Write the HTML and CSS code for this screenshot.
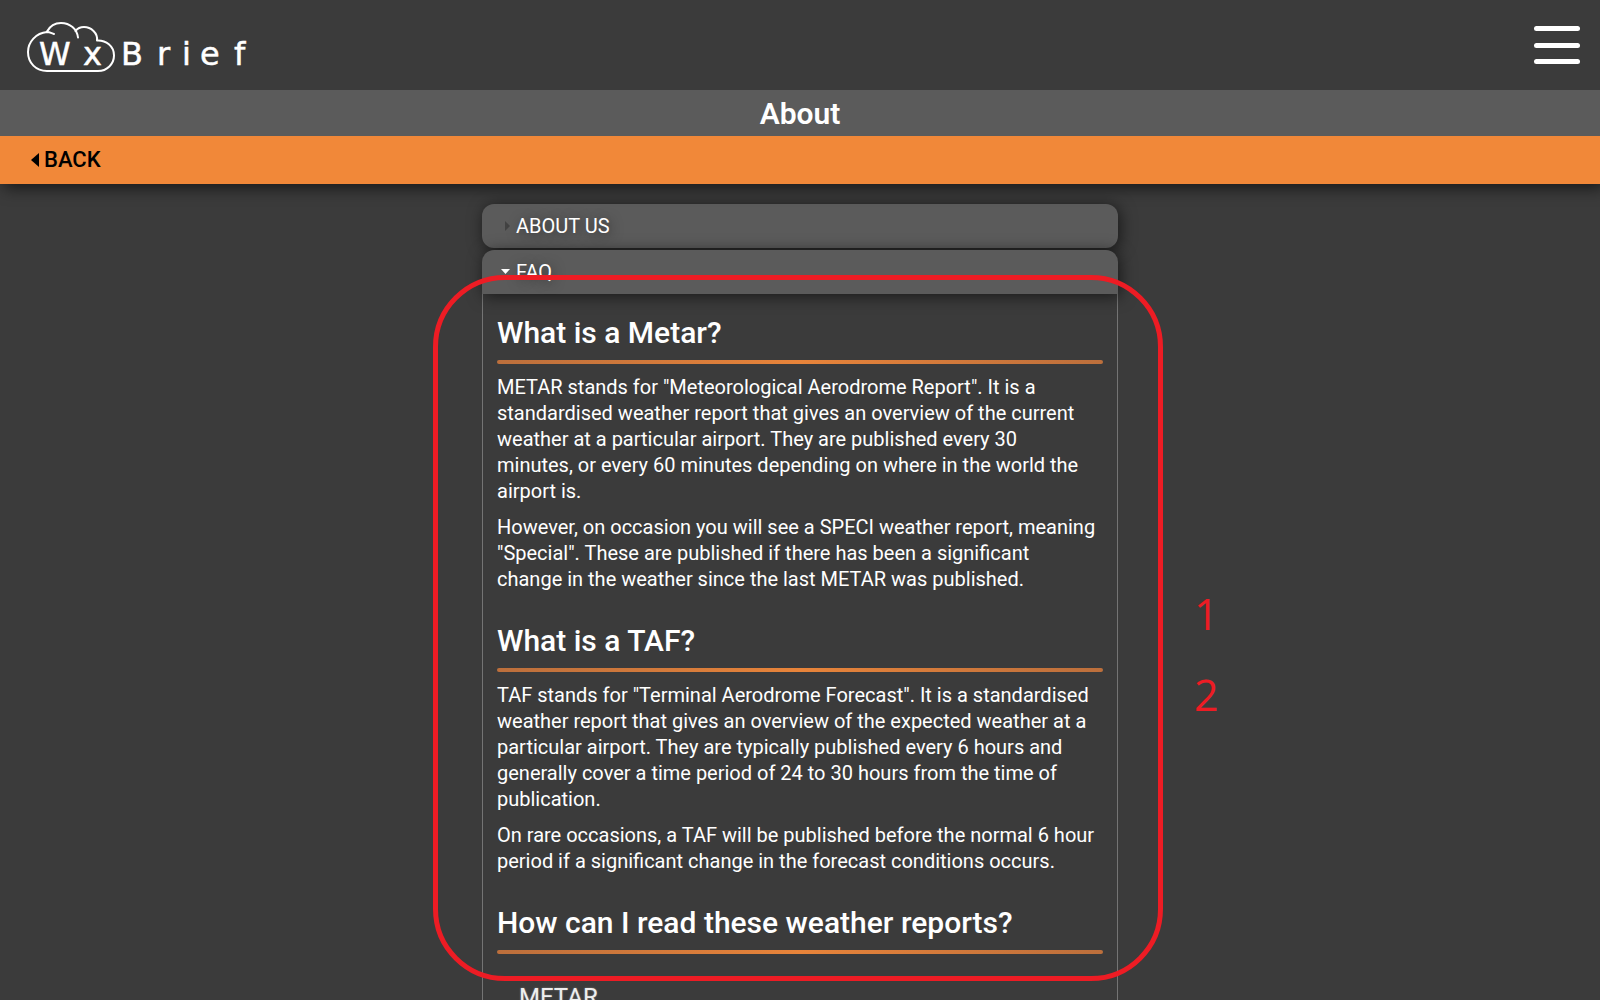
FILE: index.html
```html
<!DOCTYPE html>
<html lang="en">
<head>
<meta charset="utf-8">
<meta name="viewport" content="width=device-width, initial-scale=1">
<title>WxBrief - About</title>
<link rel="stylesheet" href="styles.css">
</head>
<body>
<header class="masthead">
  <a class="logo" href="#" aria-label="WxBrief home">
    <svg width="226" height="54" viewBox="26 20 226 54">
      <g fill="none" stroke="#fff" stroke-width="2" stroke-linecap="round" stroke-linejoin="round">
        <path d="M54 34C51 33 50 32 47 32C36 33 28 42 28 52C28 63 36 71 47 71H98C107 71 114 64 114 55.500C114 46 106 40 97 40.500C98 33 91 27 84 27C80 27 77 29 75.500 31"/>
        <path d="M47 31.500C50 26 55 23 61 23C70 23 77 29 78 37.500"/>
      </g>
      <g class="logo-text">
        <text x="39 83" y="65">Wx</text>
        <text x="121 157 182 200 234" y="65">Brief</text>
      </g>
    </svg>
  </a>
  <button class="menu-button" type="button" aria-label="Menu">
    <span class="bar"></span><span class="bar"></span><span class="bar"></span>
  </button>
</header>
<h1 class="page-title">About</h1>
<nav class="back-bar">
  <a class="back" href="#"><svg width="8" height="14" viewBox="0 0 8 14" aria-hidden="true"><path d="M8 0V14L0 7Z"/></svg>BACK</a>
</nav>
<main class="content">
  <details class="section">
    <summary class="section-head"><svg class="caret" width="12" height="12" viewBox="0 0 12 12" aria-hidden="true"><path fill="#424242" d="M4 1V11L9 6Z"/></svg>ABOUT US</summary>
  </details>
  <details class="section" open>
    <summary class="section-head"><svg class="caret" width="12" height="12" viewBox="0 0 12 12" aria-hidden="true"><path fill="#fff" d="M0 3H9L4.500 8Z"/></svg>FAQ</summary>
    <div class="panel">
      <h2 class="question">What is a Metar?</h2>
      <p class="answer">METAR stands for "Meteorological Aerodrome Report". It is a standardised weather report that gives an overview of the current weather at a particular airport. They are published every 30 minutes, or every 60 minutes depending on where in the world the airport is.</p>
      <p class="answer">However, on occasion you will see a SPECI weather report, meaning "Special". These are published if there has been a significant change in the weather since the last METAR was published.</p>
      <h2 class="question">What is a TAF?</h2>
      <p class="answer">TAF stands for "Terminal Aerodrome Forecast". It is a standardised weather report that gives an overview of the expected weather at a particular airport. They are typically published every 6 hours and generally cover a time period of 24 to 30 hours from the time of publication.</p>
      <p class="answer">On rare occasions, a TAF will be published before the normal 6 hour period if a significant change in the forecast conditions occurs.</p>
      <h2 class="question">How can I read these weather reports?</h2>
      <h3 class="topic">METAR</h3>
    </div>
  </details>
</main>
<div class="markup">
  <span>1</span>
  <span>2</span>
</div>
</body>
</html>
```
FILE: styles.css
```css
* {
  box-sizing: border-box;
}

body {
  position: relative;
  display: flex;
  flex-direction: column;
  height: 100vh;
  margin: 0;
  overflow: hidden;
  background: #3b3b3b;
  color: #fff;
  font-family: Roboto, "Liberation Sans", sans-serif;
  font-size: 20px;
  line-height: 26px;
}

.masthead {
  flex: none;
  display: flex;
  justify-content: space-between;
  align-items: center;
  height: 90px;
  padding: 4px 20px 0 26px;
}

.logo,
.logo svg {
  display: block;
}

.logo-text {
  fill: #fff;
  stroke: #fff;
  stroke-width: 0.5;
  font-family: "DejaVu Sans", sans-serif;
  font-size: 32px;
}

.menu-button {
  display: flex;
  flex-direction: column;
  justify-content: space-between;
  width: 46px;
  height: 38px;
  margin-bottom: 4px;
  padding: 0;
  border: 0;
  background: none;
}

.bar {
  height: 5px;
  border-radius: 3px;
  background: #fff;
}

.page-title {
  position: relative;
  z-index: 2;
  flex: none;
  height: 46px;
  margin: 0;
  background: #5b5b5b;
  font-size: 30px;
  font-weight: 600;
  line-height: 48px;
  text-align: center;
}

.back-bar {
  z-index: 1;
  flex: none;
  display: flex;
  align-items: center;
  height: 48px;
  padding: 0 31px;
  background: #f18839;
  box-shadow: 4px 4px 16px rgba(0, 0, 0, 0.6);
}

.back {
  display: flex;
  align-items: center;
  gap: 5px;
  color: #000;
  font-size: 22px;
  font-weight: 500;
  text-decoration: none;
}

.content {
  flex: 1;
  display: flex;
  flex-direction: column;
  gap: 2px;
  min-height: 0;
  padding: 20px 16px 0;
  overflow: hidden;
}

.section {
  flex: none;
  width: 100%;
  max-width: 636px;
  margin: 0 auto;
}

.section-head {
  position: relative;
  display: flex;
  align-items: center;
  gap: 3px;
  height: 44px;
  padding-left: 19px;
  border-radius: 12px;
  background: #5b5b5b;
  box-shadow: 2px 2px 16px rgba(0, 0, 0, 0.6);
  text-shadow: 2px 2px 12px rgba(0, 0, 0, 0.5);
  list-style: none;
}

.section[open] .section-head {
  border-radius: 12px 12px 0 0;
}

.panel {
  padding: 0 14px 14px;
  border: 1px solid #747474;
  border-top: 0;
}

.question {
  margin: 0 0 10px;
  padding-top: 19px;
  font-size: 30px;
  font-weight: 500;
  line-height: 40px;
}

.question::after {
  content: "";
  display: block;
  height: 4px;
  margin-top: 7px;
  border-radius: 2px;
  background: linear-gradient(90deg, #bc6f3c, #e8843a 50%, #bc6f3c);
}

.answer {
  margin: 0 0 10px;
  padding-right: 6px;
}

.topic {
  margin: 0;
  padding: 18px 22px 0;
  color: #eee;
  font-size: 24px;
  font-weight: 400;
  line-height: 30px;
  text-shadow: 0 0 2px rgba(255, 255, 255, 0.4);
}

/* Review outline drawn over the page */
.markup {
  position: absolute;
  z-index: 2;
  top: 275px;
  left: calc(50% - 367px);
  display: flex;
  flex-direction: column;
  justify-content: center;
  width: 730px;
  height: 706px;
  padding-top: 52px;
  border: 5px solid #ed1c24;
  border-radius: 72px;
  color: #ed1c24;
  font-family: "Open Sans", sans-serif;
  font-size: 43px;
  line-height: 81px;
  pointer-events: none;
}

.markup span {
  align-self: flex-end;
  width: 24px;
  margin-right: -60px;
}
```
